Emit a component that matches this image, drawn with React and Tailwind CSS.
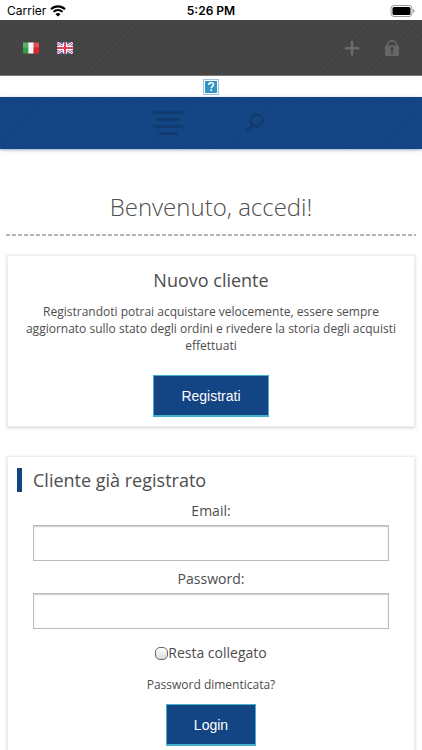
function StatusBar() {
  return (
    <div className="grid h-5 grid-cols-3 items-center bg-white px-[7px] pt-px text-black">
      <div className="flex items-center gap-1 font-['Inter','Liberation_Sans',sans-serif] text-xs">
        Carrier
        <svg width="16" height="12" viewBox="0 0 16 12" aria-hidden="true">
          <path d="M1 4.2a10 10 0 0 1 14 0" fill="none" stroke="#000" strokeWidth="2.1" />
          <path d="M3.5 6.9a6.4 6.4 0 0 1 9 0" fill="none" stroke="#000" strokeWidth="2" />
          <path d="M8 11.6 5.500 9.200a3.600 3.600 0 0 1 5 0z" />
        </svg>
      </div>
      <div className="text-center font-['Inter','Liberation_Sans',sans-serif] text-xs font-semibold">
        5:26 PM
      </div>
      <svg className="justify-self-end" width="25" height="12" viewBox="0 0 25 12" aria-hidden="true">
        <rect x="1" y=".5" width="21" height="11" rx="3" fill="#fff" stroke="#999" />
        <rect x="2.500" y="2" width="18" height="8" rx="1.500" />
        <path d="M23.300 4v4c1.600-.5 1.600-3.500 0-4z" fill="#888" />
      </svg>
    </div>
  );
}

function ItalianFlag() {
  return (
    <svg width="16" height="12" viewBox="0 0 16 12" aria-hidden="true">
      <path fill="#2f9e44" d="M0 .5h5.300v11H0z" />
      <path fill="#f4f4f4" d="M5.300 .5h5.400v11H5.300z" />
      <path fill="#e0202a" d="M10.700 .5H16v11h-5.300z" />
      <path fill="#fff" opacity=".2" d="M0 .5h16v5H0z" />
    </svg>
  );
}

function BritishFlag() {
  return (
    <svg width="16" height="12" viewBox="0 0 16 12" aria-hidden="true">
      <path fill="#5a74b4" d="M0 .5h16v11H0z" />
      <path stroke="#eef" strokeWidth="2.800" d="m0 .5 16 11M16 .5 0 11.500" />
      <path stroke="#d8475a" strokeWidth="1" d="m0 .5 16 11M16 .5 0 11.500" />
      <path stroke="#fff" strokeWidth="4" d="M8 .5v11M0 6h16" />
      <path stroke="#dc4055" strokeWidth="2" d="M8 .5v11M0 6h16" />
    </svg>
  );
}

function TopBar() {
  return (
    <header className="flex h-[56px] items-center justify-between border-b border-[#777] bg-[repeating-linear-gradient(135deg,#434343_0px,#434343_2px,#464646_2px,#464646_4px)] pt-px pr-[22px] pl-[23px]">
      <nav className="flex gap-[18px]">
        <a href="#it" aria-label="Italiano"><ItalianFlag /></a>
        <a href="#en" aria-label="English"><BritishFlag /></a>
      </nav>
      <div className="flex items-center gap-6">
        <button type="button" aria-label="Apri">
          <svg width="16" height="16" viewBox="0 0 16 16" fill="none" stroke="#6c6c6c" strokeWidth="2.600">
            <path strokeLinecap="round" d="M8 2v12.500M1.800 8.200h12.500" />
          </svg>
        </button>
        <button type="button" aria-label="Accedi">
          <svg width="16" height="16" viewBox="0 0 16 16">
            <path d="M3.500 7V5a4.500 4.200 0 0 1 9 0v2" fill="none" stroke="#666" strokeWidth="1.800" />
            <rect x="1" y="5.500" width="14" height="10.500" rx=".5" fill="#666" />
            <path d="M8 7.200a1.700 1.700 0 0 1 .8 3.200V14H7.200v-3.600A1.700 1.700 0 0 1 8 7.200z" fill="#444" />
          </svg>
        </button>
      </div>
    </header>
  );
}

function LogoRow() {
  return (
    <div className="flex h-[21px] items-center justify-center bg-white">
      <svg width="18" height="18" viewBox="0 0 18 18" role="img" aria-label="Logo">
        <rect x="1.500" y="1.500" width="15" height="15" fill="#fff" stroke="#9cc3dd" />
        <rect x="3" y="3" width="12" height="12" fill="#3295c4" />
        <path d="M6.700 7c0-3 4.800-3 4.800-.4 0 1.700-2.300 1.700-2.300 3.600" fill="none" stroke="#fff" strokeWidth="1.500" />
        <rect x="8.400" y="11.300" width="1.700" height="1.700" fill="#fff" />
      </svg>
    </div>
  );
}

function MainNav() {
  return (
    <nav className="flex h-[52px] items-center justify-center gap-[60px] bg-[repeating-linear-gradient(135deg,#134484_0px,#134484_2px,#144686_2px,#144686_4px)] pr-[6px] shadow-[0_1px_3px_rgba(19,68,132,0.45)]">
      <button type="button" aria-label="Menu">
        <svg width="32" height="26" viewBox="0 0 32 26" fill="none" stroke="#123a6d" strokeWidth="2.600" strokeLinecap="round">
          <path d="M2 2.500h28M5 9.500h22M2 16.500h28M7.500 23.500h17.500" />
        </svg>
      </button>
      <button type="button" aria-label="Cerca">
        <svg width="20" height="22" viewBox="0 0 20 22" fill="none" stroke="#123a6d">
          <circle cx="12.500" cy="8.500" r="6" strokeWidth="2.400" />
          <path d="m8 13.500-5.500 5.500" strokeWidth="3" strokeLinecap="round" />
        </svg>
      </button>
    </nav>
  );
}

function Card({ children }) {
  return (
    <section className="border border-[#eee] bg-white px-[9px] pb-[9px] shadow-[0_1px_3px_rgba(0,0,0,0.18)]">
      {children}
    </section>
  );
}

function ActionButton({ type, children }) {
  return (
    <button
      type={type}
      className="h-[42px] border border-b-2 border-[#43afc9] bg-[#134484] px-[27px] font-['Liberation_Sans',sans-serif] text-sm text-white"
    >
      {children}
    </button>
  );
}

function Field({ id, type, label }) {
  return (
    <div className="flex flex-col">
      <label htmlFor={id} className="pt-1 text-center text-sm leading-7">
        {label}
      </label>
      <input
        id={id}
        type={type}
        className="h-9 w-full border border-[#bbb] bg-white px-2 text-sm shadow-[inset_0_1px_1px_#ccc] outline-none"
      />
    </div>
  );
}

export default function App() {
  return (
    <div className="min-h-screen bg-white font-['Open_Sans','Noto_Sans',sans-serif] text-[#4d4d4d]">
      <StatusBar />
      <TopBar />
      <LogoRow />
      <MainNav />
      <main className="px-[6px] pt-10">
        <h1 className="pb-[9px] text-center text-2xl leading-9 font-light">Benvenuto, accedi!</h1>
        <div className="h-[2px] bg-[repeating-linear-gradient(90deg,#b4b4b4_0px,#b4b4b4_4px,#ffffff_4px,#ffffff_6px)]" />
        <div className="flex flex-col gap-[29px] px-px pt-[19px]">
          <Card>
            <h2 className="pt-3 text-center text-lg leading-6">Nuovo cliente</h2>
            <p className="pt-[11px] text-center text-xs leading-[17px]">
              Registrandoti potrai acquistare velocemente, essere sempre aggiornato sullo stato degli
              ordini e rivedere la storia degli acquisti effettuati
            </p>
            <div className="flex justify-center pt-[21px]">
              <ActionButton type="button">Registrati</ActionButton>
            </div>
          </Card>
          <Card>
            <form className="pt-[11px]" onSubmit={(event) => event.preventDefault()}>
              <h2 className="border-l-[5px] border-[#134484] pl-[11px] text-lg leading-6">
                Cliente già registrato
              </h2>
              <div className="px-4 pt-px">
                <Field id="email" type="email" label="Email:" />
                <Field id="password" type="password" label="Password:" />
                <div className="flex items-center justify-center pt-[14px]">
                  <input
                    id="remember"
                    type="checkbox"
                    className="size-[13px] appearance-none rounded-[5px] border border-[#666] bg-linear-to-b from-white to-[#ddd] checked:to-[#777]"
                  />
                  <label htmlFor="remember" className="text-sm leading-5">
                    Resta collegato
                  </label>
                </div>
                <div className="pt-3 text-center text-xs leading-5">
                  <a href="#recupero">Password dimenticata?</a>
                </div>
                <div className="flex justify-center pt-[9px]">
                  <ActionButton type="submit">Login</ActionButton>
                </div>
              </div>
            </form>
          </Card>
        </div>
      </main>
    </div>
  );
}
